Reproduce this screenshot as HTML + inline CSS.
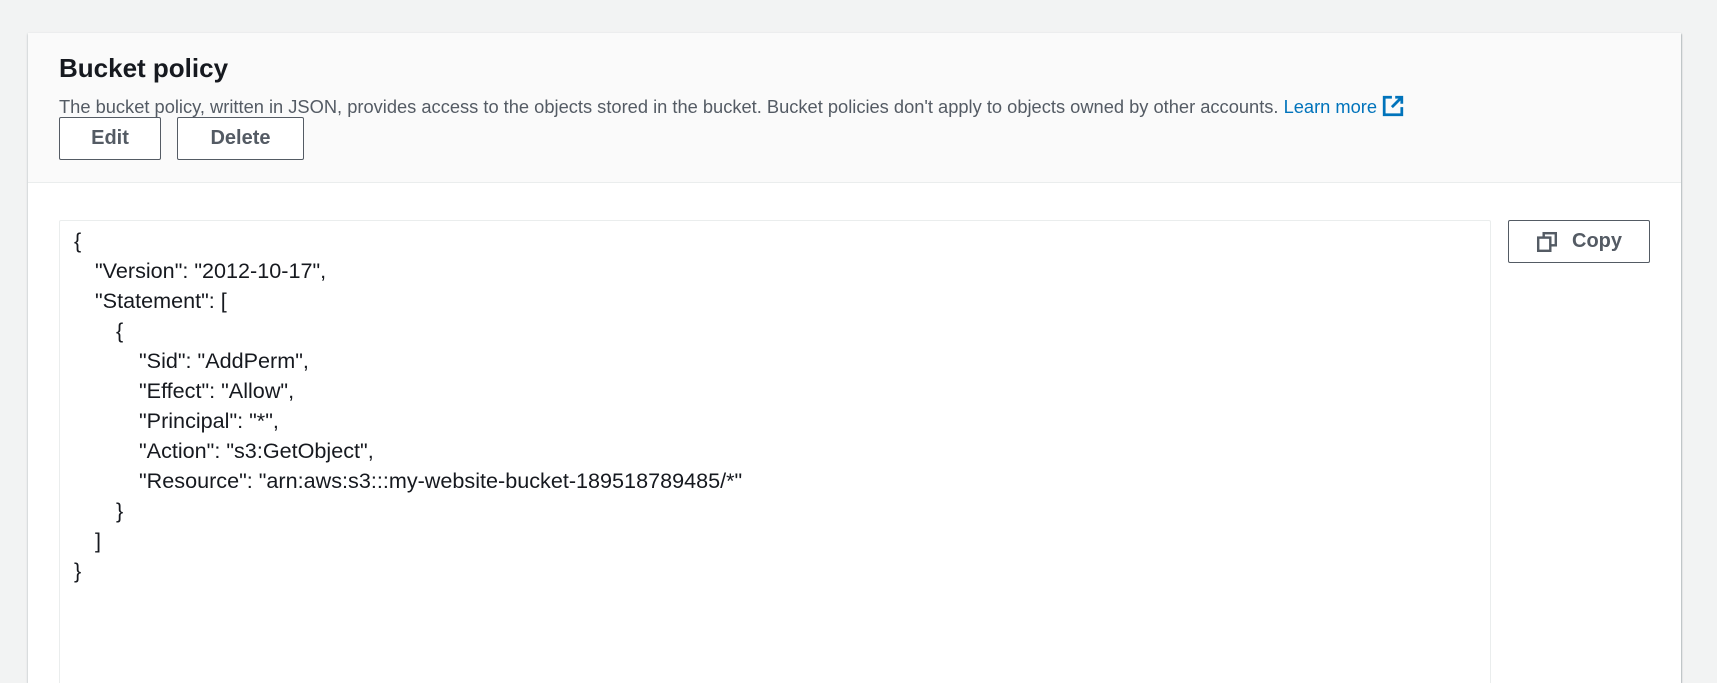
<!DOCTYPE html>
<html><head><meta charset="utf-8"><style>
*{margin:0;padding:0;box-sizing:border-box}
html,body{width:1717px;height:683px;overflow:hidden}
body{background:#f2f3f3;font-family:"Liberation Sans",sans-serif;position:relative}
.card{position:absolute;left:28px;top:33px;width:1653px;height:650px;background:#fff;box-shadow:0 1px 2px rgba(0,28,36,.3),1px 1px 1px rgba(0,28,36,.15);overflow:hidden}
.hdr{position:absolute;left:0;top:0;width:100%;height:150px;background:#fafafa;border-bottom:1px solid #eaeded}
h1{position:absolute;left:31px;top:20px;font-size:26px;font-weight:bold;color:#16191f}
.desc{position:absolute;left:31px;top:62px;font-size:18.3px;color:#545b64;white-space:nowrap}
.desc a{color:#0073bb;text-decoration:none}
.btn{position:absolute;top:84px;height:43px;border:1px solid #545b64;border-radius:2px;background:#fff;color:#545b64;font-weight:bold;font-size:20px;display:flex;align-items:center;justify-content:center}
.ed{position:absolute;left:31px;top:187px;width:1432px;height:470px;border:1px solid #eaeded;border-bottom:none;border-radius:2px}
.code{position:absolute;left:0;top:193px;font-size:21.6px;line-height:30px;color:#16191f;white-space:nowrap}
.code div{height:30px}
</style></head><body>
<div class="card">
<div class="hdr">
<h1>Bucket policy</h1>
<div class="desc">The bucket policy, written in JSON, provides access to the objects stored in the bucket. Bucket policies don't apply to objects owned by other accounts. <a>Learn more <svg width="22" height="22" viewBox="0 0 20 20" style="vertical-align:-4px"><path d="M9 2H2v16h16v-7" fill="none" stroke="#0073bb" stroke-width="2.5"/><path d="M12 2h6v6M18 2l-9 9" fill="none" stroke="#0073bb" stroke-width="2.5"/></svg></a></div>
<div class="btn" style="left:31px;width:102px">Edit</div>
<div class="btn" style="left:149px;width:127px">Delete</div>
</div>
<div class="ed"></div>
<div class="code"><div style="margin-left:46px">{</div><div style="margin-left:67px">"Version": "2012-10-17",</div><div style="margin-left:67px">"Statement": [</div><div style="margin-left:88px">{</div><div style="margin-left:111px">"Sid": "AddPerm",</div><div style="margin-left:111px">"Effect": "Allow",</div><div style="margin-left:111px">"Principal": "*",</div><div style="margin-left:111px">"Action": "s3:GetObject",</div><div style="margin-left:111px">"Resource": "arn:aws:s3:::my-website-bucket-189518789485/*"</div><div style="margin-left:88px">}</div><div style="margin-left:67px">]</div><div style="margin-left:46px">}</div></div>
<div class="btn" style="left:1480px;top:187px;width:142px"><svg width="22" height="22" viewBox="0 0 20 20" style="margin-right:14px"><rect x="7" y="2" width="11" height="11" fill="none" stroke="#545b64" stroke-width="2.2"/><rect x="2" y="6" width="11" height="12" fill="#fff" stroke="#545b64" stroke-width="2.2"/></svg>Copy</div>
</div>
</body></html>
